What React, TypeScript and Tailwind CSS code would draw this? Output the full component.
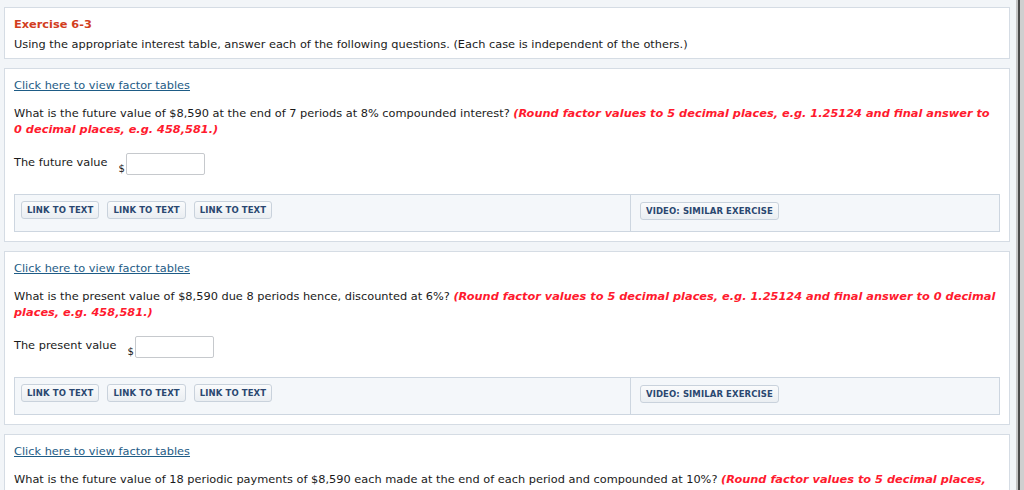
const font = { fontFamily: '"DejaVu Sans", Verdana, sans-serif' };

function LinkButton({ label }: { label: string }) {
  return (
    <button className="h-[18px] px-[5px] rounded-[3px] border border-[#c9d2dc] bg-gradient-to-b from-[#fafbfc] to-[#eaeef2] text-[8.5px] font-bold text-[#2a4770] leading-none tracking-[0.1px]">
      {label}
    </button>
  );
}

function Question({
  text,
  hint,
  label,
}: {
  text: string;
  hint: string;
  label: string;
}) {
  return (
    <div className="shrink-0 border border-[#d5dce4] bg-white px-[9px] pt-[8px] pb-[9px]">
      <a href="#" className="text-[#1e5c86] underline underline-offset-[1px] leading-[16px] block w-fit">
        Click here to view factor tables
      </a>
      <p className="mt-[12px] leading-[16px] text-[#1a1a1a] pr-[4px]">
        {text}{" "}
        <em className="font-bold text-[#ff1a2e]">{hint}</em>
      </p>
      <div className="mt-[16px] flex items-start h-[22px]">
        <span className="leading-[16px] mt-[1px]">{label}</span>
        <span className="ml-[11px] mt-[9px] leading-[14px] text-[10px]">$</span>
        <input className="ml-[1px] w-[79px] h-[22px] border border-[#c6c9cd] rounded-[2px] bg-white" />
      </div>
      <div className="mt-[19px] flex h-[38px] border border-[#cdd6e0] bg-[#f4f7fa]">
        <div className="w-[616px] border-r border-[#cdd6e0] flex items-start gap-[8px] px-[6px] pt-[6px]">
          <LinkButton label="LINK TO TEXT" />
          <LinkButton label="LINK TO TEXT" />
          <LinkButton label="LINK TO TEXT" />
        </div>
        <div className="flex-1 pl-[9px] pt-[7px]">
          <LinkButton label="VIDEO: SIMILAR EXERCISE" />
        </div>
      </div>
    </div>
  );
}

export default function App() {
  return (
    <div className="w-[1024px] h-[490px] overflow-hidden bg-[#f2f5f8] flex text-[11.35px] text-[#1a1a1a]" style={font}>
      <div className="flex-1 pl-[4px] pr-[6px] pt-[7px] flex flex-col gap-[9px]">
        <div className="shrink-0 border border-[#d5dce4] bg-white px-[9px] pt-[8px] h-[52px]">
          <h2 className="font-bold text-[#d23d1e] leading-[16px]">Exercise 6-3</h2>
          <p className="mt-[4px] leading-[16px]">
            Using the appropriate interest table, answer each of the following questions. (Each case is independent of the others.)
          </p>
        </div>
        <Question
          text="What is the future value of $8,590 at the end of 7 periods at 8% compounded interest?"
          hint="(Round factor values to 5 decimal places, e.g. 1.25124 and final answer to 0 decimal places, e.g. 458,581.)"
          label="The future value"
        />
        <Question
          text="What is the present value of $8,590 due 8 periods hence, discounted at 6%?"
          hint="(Round factor values to 5 decimal places, e.g. 1.25124 and final answer to 0 decimal places, e.g. 458,581.)"
          label="The present value"
        />
        <Question
          text="What is the future value of 18 periodic payments of $8,590 each made at the end of each period and compounded at 10%?"
          hint="(Round factor values to 5 decimal places, e.g. 1.25124 and final answer to 0 decimal places, e.g. 458,581.)"
          label="The future value"
        />
      </div>
      <div className="w-[8px] flex">
        <div className="w-[2px] bg-[#c4c4c4]" />
        <div className="w-[2px] bg-[#4a4a4a]" />
        <div className="flex-1 bg-[#cfcfcf]" />
      </div>
    </div>
  );
}
